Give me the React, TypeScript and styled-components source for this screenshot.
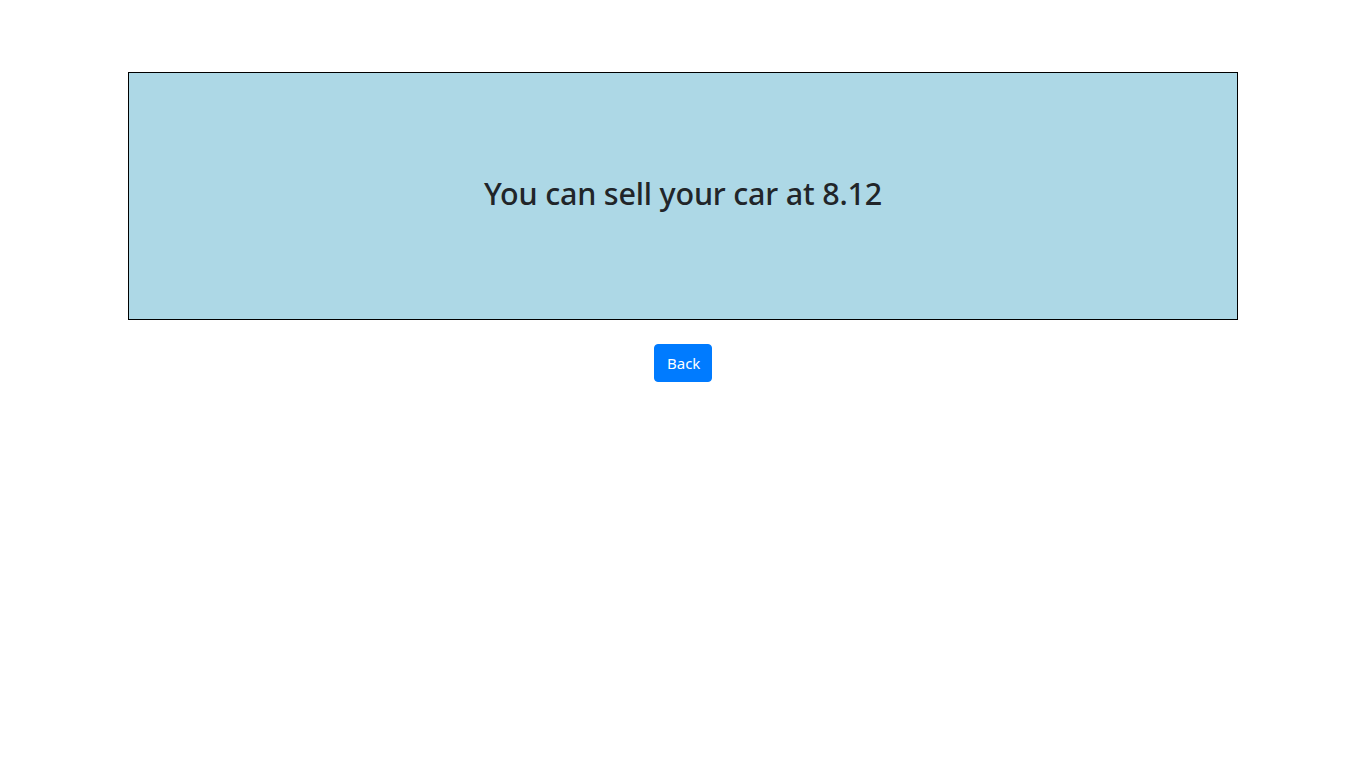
import React from "react";
import styled, { createGlobalStyle } from "styled-components";

const GlobalStyle = createGlobalStyle`
  * { box-sizing: border-box; }
  body {
    margin: 0;
    background: #ffffff;
    color: #212529;
    font-family: "Noto Sans", "Open Sans", "Liberation Sans", sans-serif;
    font-size: 16px;
    line-height: 1.5;
  }
`;

const Container = styled.div`
  max-width: 1140px;
  margin: 0 auto;
  padding: 72px 15px 0;
  display: flex;
  flex-direction: column;
  align-items: center;
  gap: 24px;
`;

const ResultBox = styled.div`
  width: 100%;
  height: 248px;
  background: #add8e6;
  border: 1px solid #000000;
  display: flex;
  align-items: center;
  justify-content: center;
`;

const Heading = styled.h2`
  margin: 0 0 6px;
  font-size: 30.5px;
  font-weight: 500;
  line-height: 1.2;
  color: #212529;
  letter-spacing: -0.2px;
`;

const Button = styled.button`
  font-family: inherit;
  font-size: 15px;
  line-height: 24px;
  padding: 6px 12px;
  height: 38px;
  width: 58px;
  color: #ffffff;
  background: #007bff;
  border: 1px solid #007bff;
  border-radius: 4px;
  cursor: pointer;
`;

export default function App() {
  return (
    <>
      <GlobalStyle />
      <Container>
        <ResultBox>
          <Heading>You can sell your car at 8.12</Heading>
        </ResultBox>
        <Button>Back</Button>
      </Container>
    </>
  );
}
